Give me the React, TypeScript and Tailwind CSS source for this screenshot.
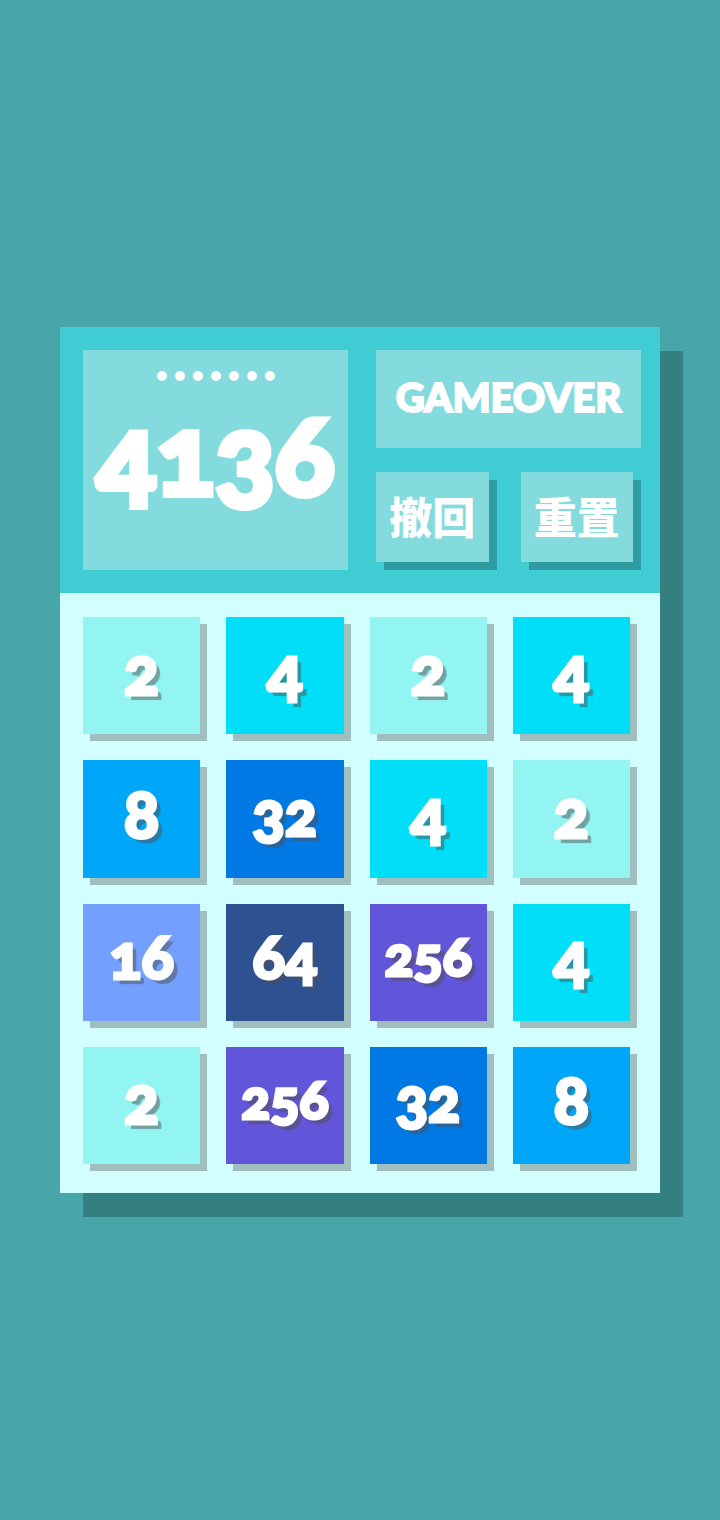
import { clsx } from "clsx";

const board = [
  [2, 4, 2, 4],
  [8, 32, 4, 2],
  [16, 64, 256, 4],
  [2, 256, 32, 8],
];

const tileColors: Record<number, string> = {
  2: "bg-[#93f5f2]",
  4: "bg-[#00def8]",
  8: "bg-[#00a6f8]",
  16: "bg-[#739fff]",
  32: "bg-[#0079e4]",
  64: "bg-[#2e5192]",
  256: "bg-[#6155d9]",
};

// longer numbers get a smaller font
const tileSizes = ["text-[66px]", "text-[60px]", "text-[54px]"];

function Tile({ value }: { value: number }) {
  return (
    <div
      className={clsx(
        "flex aspect-square items-center justify-center pb-3 leading-none shadow-[7px_7px_0_#9fbebe]",
        "[-webkit-text-stroke:3px_white] [text-shadow:5px_5px_1px_rgb(80_80_80/0.5)]",
        tileColors[value],
        tileSizes[String(value).length - 1],
      )}
    >
      {value}
    </div>
  );
}

function ActionButton({ label }: { label: string }) {
  return (
    <button
      type="button"
      className="flex h-[90px] flex-1 items-center justify-center bg-[#84dbdd] text-[43px] leading-none whitespace-nowrap shadow-[8px_8px_0_#2f9aa1]"
    >
      {label}
    </button>
  );
}

export default function App() {
  return (
    <main className="flex min-h-screen items-center bg-[#46a6a8] px-[60px] font-['Lato','Noto_Sans_CJK_SC',sans-serif] font-black text-white oldstyle-nums">
      <div className="w-full shadow-[23px_24px_0_#347f7f]">
        <header className="grid grid-cols-2 gap-7 bg-[#3fccd3] py-[23px] pr-[19px] pl-[23px]">
          <section className="flex flex-col items-center bg-[#84dbdd] pt-[21px]">
            <div className="flex gap-2">
              {Array.from({ length: 7 }, (_, i) => (
                <span key={i} className="size-2.5 rounded-full bg-white" />
              ))}
            </div>
            <p className="pt-4 text-[110px] leading-none [-webkit-text-stroke:6px_white]">4136</p>
          </section>
          <div className="flex flex-col gap-6">
            <div className="flex h-[98px] items-center justify-center bg-[#84dbdd] pb-1 text-[40px] leading-none [-webkit-text-stroke:2px_white]">
              GAMEOVER
            </div>
            <div className="flex gap-8 pr-2 pb-2">
              <ActionButton label="撤回" />
              <ActionButton label="重置" />
            </div>
          </div>
        </header>
        <div className="grid grid-cols-4 gap-[26px] bg-[#d3fefe] pt-6 pr-[30px] pb-[29px] pl-[23px]">
          {board.flat().map((value, i) => (
            <Tile key={i} value={value} />
          ))}
        </div>
      </div>
    </main>
  );
}
